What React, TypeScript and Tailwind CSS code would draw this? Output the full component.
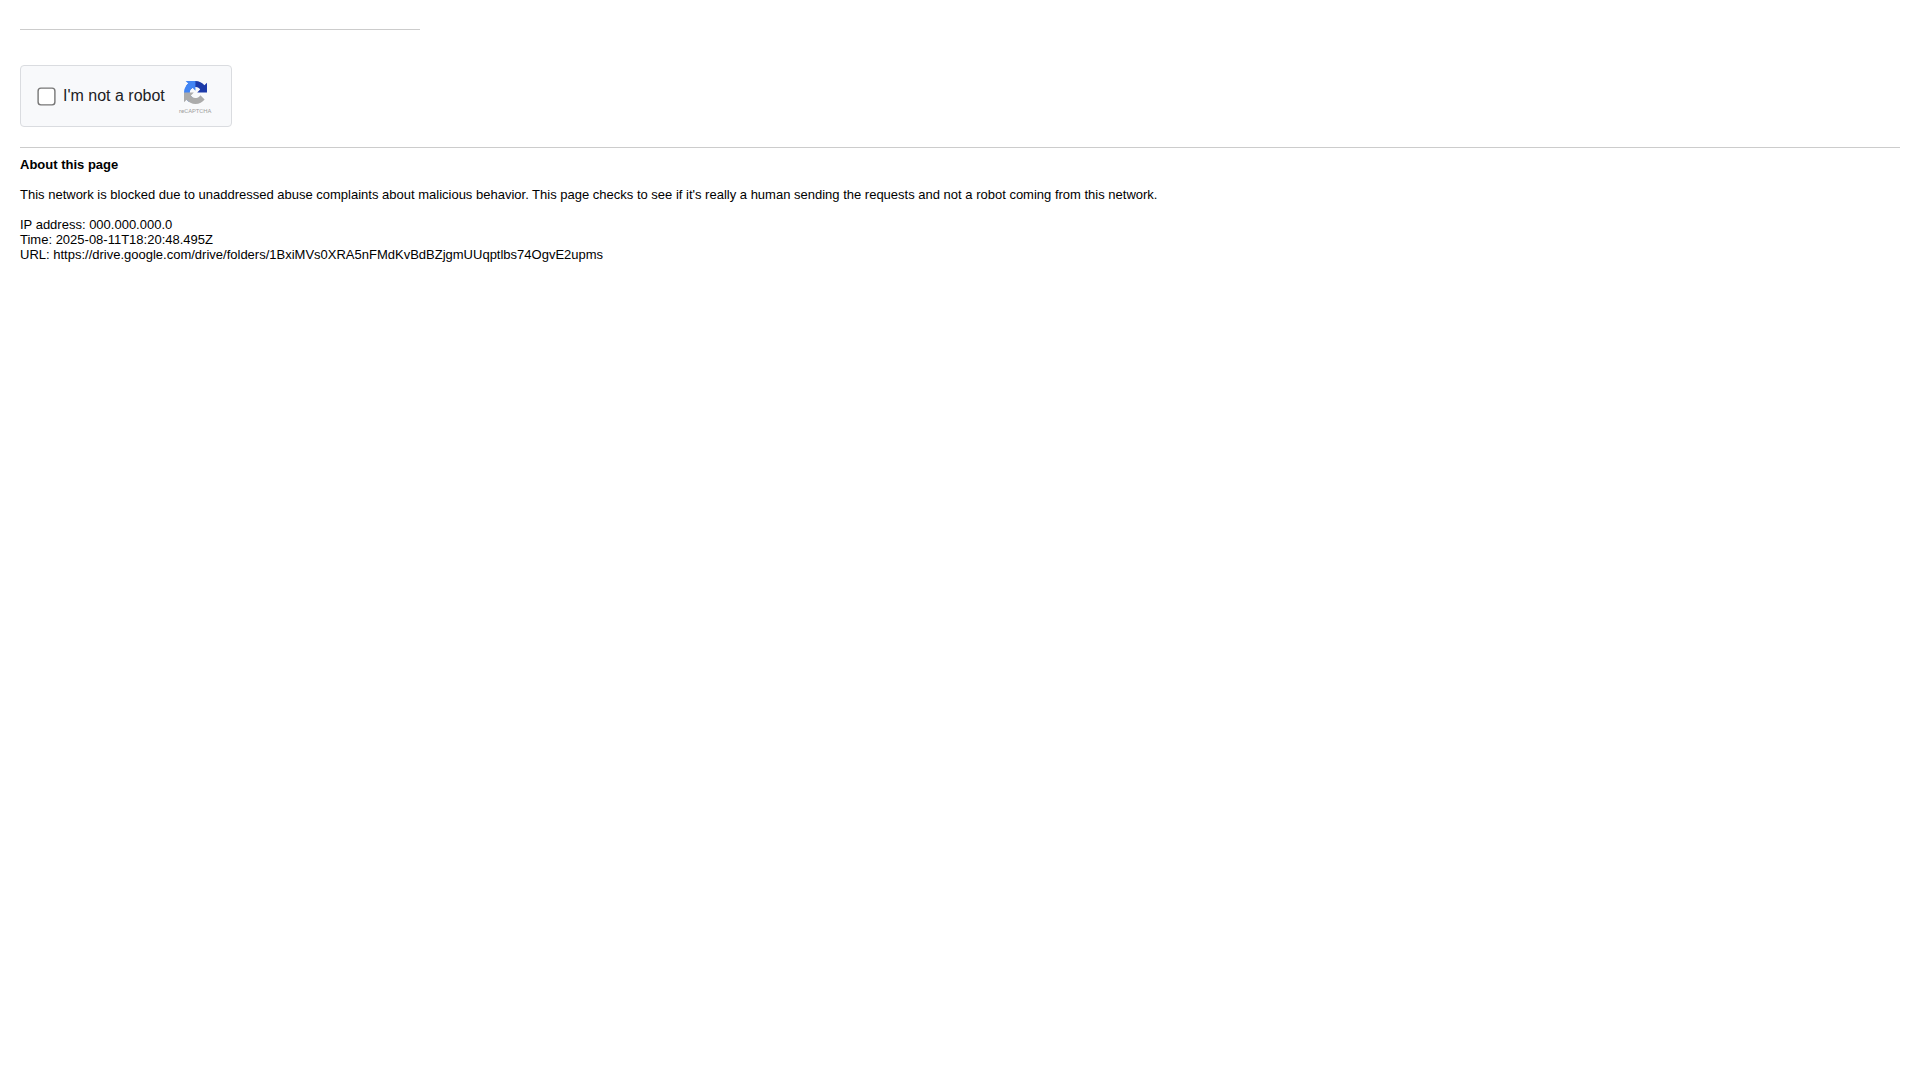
function RecaptchaLogo() {
  return (
    <svg viewBox="0 0 64 64" className="size-[23px]" aria-hidden="true">
      <path
        fill="#1c3aa9"
        d="M64 31.955l-.033-1.37V4.687l-7.16 7.16C50.948 4.674 42.033.093 32.05.093c-10.4 0-19.622 4.96-25.458 12.64l11.736 11.86a15.55 15.55 0 0 1 4.754-5.334c2.05-1.6 4.952-2.906 8.968-2.906.485 0 .86.057 1.135.163 4.976.393 9.288 3.14 11.828 7.124l-8.307 8.307L64 31.953"
      />
      <path
        fill="#4285f4"
        d="M31.862.094l-1.37.033H4.594l7.16 7.16C4.58 13.147 0 22.06 0 32.046c0 10.4 4.96 19.622 12.64 25.458L24.5 45.768a15.55 15.55 0 0 1-5.334-4.754c-1.6-2.05-2.906-4.952-2.906-8.968 0-.485.057-.86.163-1.135.393-4.976 3.14-9.288 7.124-11.828l8.307 8.307L31.86.095"
      />
      <path
        fill="#ababab"
        d="M.001 32.045l.033 1.37v25.898l7.16-7.16c5.86 7.173 14.774 11.754 24.76 11.754 10.4 0 19.622-4.96 25.458-12.64l-11.736-11.86a15.55 15.55 0 0 1-4.754 5.334c-2.05 1.6-4.952 2.906-8.968 2.906-.485 0-.86-.057-1.135-.163-4.976-.393-9.288-3.14-11.828-7.124l8.307-8.307c-10.522.04-22.4.066-27.295-.005"
      />
    </svg>
  );
}

export default function App() {
  return (
    <main className="bg-white px-5 pt-[29px] font-['Liberation_Sans',Arial,sans-serif] text-[13px] leading-[15px] text-black">
      <hr className="w-full max-w-[400px] border-[#ccc]" />

      <form className="mt-[35px] flex">
        <div className="flex items-center rounded border border-[#dadce0] bg-[#f8f9fb] py-[11px] pr-[18px] pl-4">
          <input id="not-robot" type="checkbox" className="mx-[3px] mt-px size-[13px] scale-140" />
          <label htmlFor="not-robot" className="pl-[7px] text-base leading-5 text-[#202124]">
            I'm not a robot
          </label>
          <div className="ml-[13px] flex w-[35px] flex-col items-center gap-[3px] pt-1">
            <RecaptchaLogo />
            <span className="font-['Roboto',sans-serif] text-[6px] leading-2 text-[#a0a0a0]">reCAPTCHA</span>
          </div>
        </div>
      </form>

      <hr className="mt-5 mb-[9px] border-[#ccc]" />

      <h1 className="font-bold">About this page</h1>
      <p className="mt-[15px]">
        This network is blocked due to unaddressed abuse complaints about malicious behavior. This page checks to see
        if it's really a human sending the requests and not a robot coming from this network.
      </p>
      <p className="mt-[15px] break-words">
        IP address: 000.000.000.0
        <br />
        Time: 2025-08-11T18:20:48.495Z
        <br />
        URL: https://drive.google.com/drive/folders/1BxiMVs0XRA5nFMdKvBdBZjgmUUqptlbs74OgvE2upms
      </p>
    </main>
  );
}
